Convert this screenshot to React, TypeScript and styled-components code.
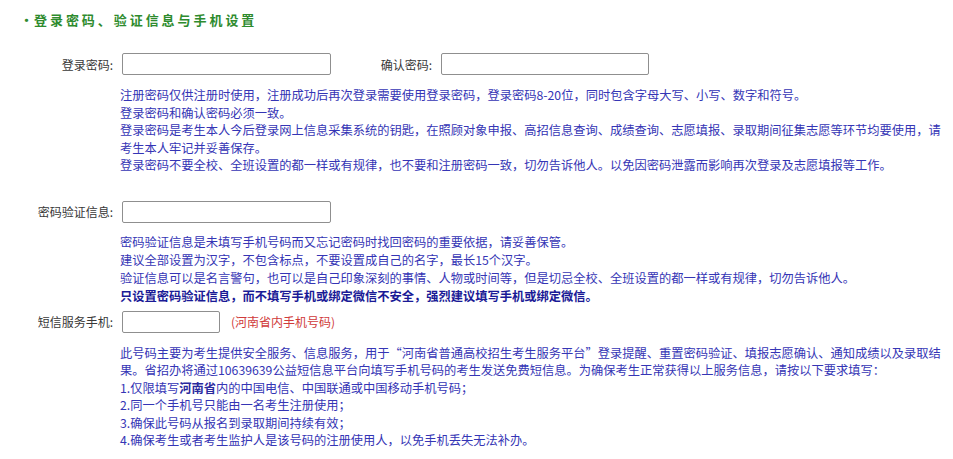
import React from "react";
import styled, { createGlobalStyle } from "styled-components";

const Global = createGlobalStyle`
  html, body { margin: 0; padding: 0; background: #fff; }
  body { font-family: "Noto Sans CJK SC", "Liberation Sans", sans-serif; font-size: 12px; color: #333; }
`;

const Page = styled.div`
  width: 953px;
  height: 459px;
  overflow: hidden;
  padding-top: 10px;
  box-sizing: border-box;
`;

const Title = styled.h2`
  display: flex;
  align-items: center;
  margin: 0 0 0 20px;
  height: 20px;
  line-height: 20px;
  font-size: 13px;
  font-weight: bold;
  color: #2e8b2e;
  letter-spacing: 2.95px;
`;

const Dot = styled.span`
  letter-spacing: 0;
  margin-right: 1px;
`;

const Section = styled.div<{ $top: number }>`
  margin-top: ${(p) => p.$top}px;
`;

const Row = styled.div`
  display: flex;
  align-items: center;
  height: 22px;
`;

const Label = styled.label<{ $w?: number }>`
  width: ${(p) => p.$w ?? 113}px;
  text-align: right;
  white-space: nowrap;
  color: #383838;
  font-size: 12px;
  margin-right: 9px;
`;

const Input = styled.input<{ $w: number }>`
  width: ${(p) => p.$w}px;
  height: 22px;
  box-sizing: border-box;
  border: 1px solid #8f8f8f;
  border-radius: 2px;
  padding: 0 3px;
  margin: 0;
  font-size: 12px;
  outline: none;
`;

const Note = styled.span`
  margin-left: 11px;
  color: #d03a3a;
  font-size: 12px;
`;

const Help = styled.div<{ $top: number; $lh: number }>`
  margin: ${(p) => p.$top}px 0 0 120px;
  width: 830px;
  white-space: nowrap;
  color: #3535b5;
  font-size: 12.25px;
  line-height: ${(p) => p.$lh}px;
`;

const Line = styled.div<{ $strong?: boolean }>`
  font-weight: ${(p) => (p.$strong ? "bold" : "normal")};
  color: ${(p) => (p.$strong ? "#1a1a96" : "inherit")};
`;

const Em = styled.b`
  font-weight: bold;
  color: #2a2a9e;
`;

export default function App() {
  return (
    <Page>
      <Global />
      <Title>
        <Dot>•</Dot>登录密码、验证信息与手机设置
      </Title>

      <Section $top={23}>
        <Row>
          <Label>登录密码:</Label>
          <Input type="password" $w={209} />
          <Label $w={101}>确认密码:</Label>
          <Input type="password" $w={208} />
        </Row>
        <Help $top={12} $lh={17.6}>
          <Line>注册密码仅供注册时使用，注册成功后再次登录需要使用登录密码，登录密码8-20位，同时包含字母大写、小写、数字和符号。</Line>
          <Line>登录密码和确认密码必须一致。</Line>
          <Line>
            登录密码是考生本人今后登录网上信息采集系统的钥匙，在照顾对象申报、高招信息查询、成绩查询、志愿填报、录取期间征集志愿等环节均要使用，请
            <br />
            考生本人牢记并妥善保存。
          </Line>
          <Line>登录密码不要全校、全班设置的都一样或有规律，也不要和注册密码一致，切勿告诉他人。以免因密码泄露而影响再次登录及志愿填报等工作。</Line>
        </Help>
      </Section>

      <Section $top={26}>
        <Row>
          <Label>密码验证信息:</Label>
          <Input type="text" $w={209} />
        </Row>
        <Help $top={10} $lh={18}>
          <Line>密码验证信息是未填写手机号码而又忘记密码时找回密码的重要依据，请妥善保管。</Line>
          <Line>建议全部设置为汉字，不包含标点，不要设置成自己的名字，最长15个汉字。</Line>
          <Line>验证信息可以是名言警句，也可以是自己印象深刻的事情、人物或时间等，但是切忌全校、全班设置的都一样或有规律，切勿告诉他人。</Line>
          <Line $strong>只设置密码验证信息，而不填写手机或绑定微信不安全，强烈建议填写手机或绑定微信。</Line>
        </Help>
      </Section>

      <Section $top={6}>
        <Row>
          <Label>短信服务手机:</Label>
          <Input type="text" $w={98} />
          <Note>(河南省内手机号码)</Note>
        </Row>
        <Help $top={12} $lh={17.4}>
          <Line>
            此号码主要为考生提供安全服务、信息服务，用于“河南省普通高校招生考生服务平台”登录提醒、重置密码验证、填报志愿确认、通知成绩以及录取结
            <br />
            果。省招办将通过10639639公益短信息平台向填写手机号码的考生发送免费短信息。为确保考生正常获得以上服务信息，请按以下要求填写：
          </Line>
          <Line>1.仅限填写<Em>河南省</Em>内的中国电信、中国联通或中国移动手机号码；</Line>
          <Line>2.同一个手机号只能由一名考生注册使用；</Line>
          <Line>3.确保此号码从报名到录取期间持续有效；</Line>
          <Line>4.确保考生或者考生监护人是该号码的注册使用人，以免手机丢失无法补办。</Line>
        </Help>
      </Section>
    </Page>
  );
}
